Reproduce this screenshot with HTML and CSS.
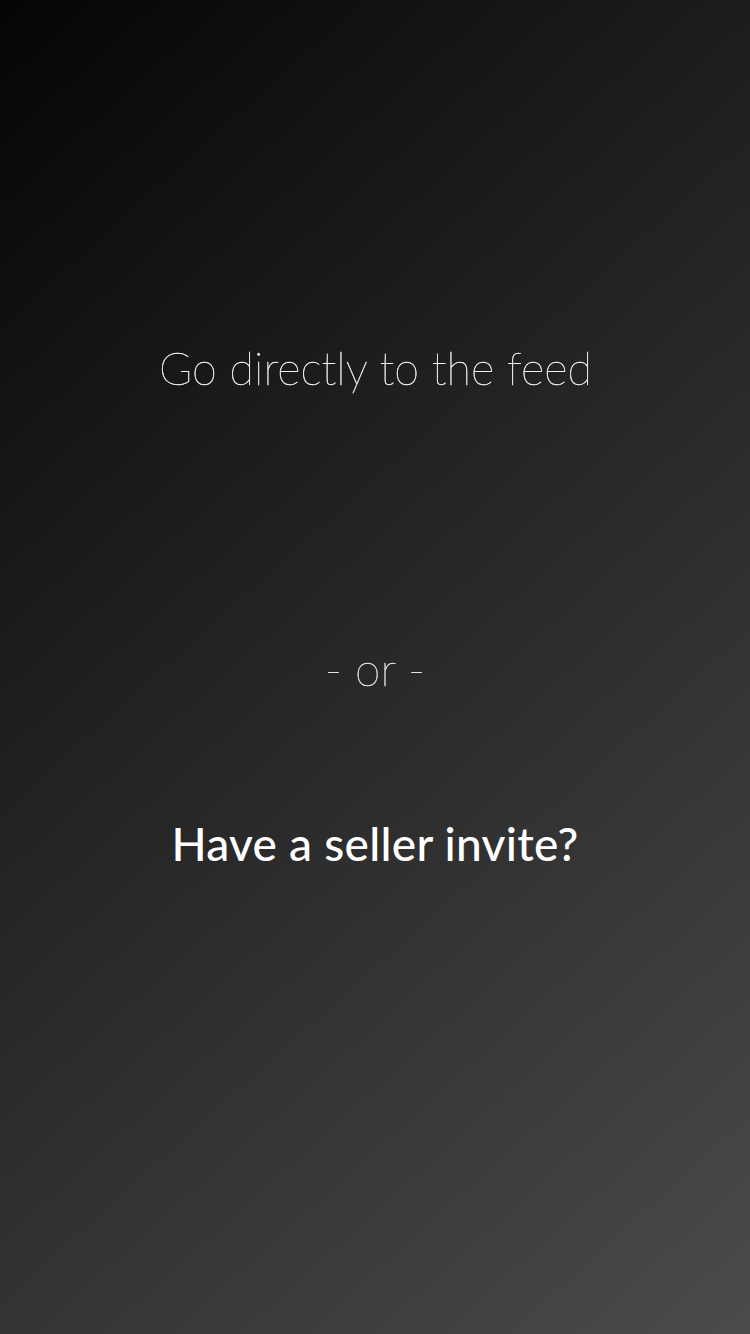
FILE: index.html
```html
<!DOCTYPE html>
<html lang="en">
<head>
<meta charset="utf-8">
<title>Welcome</title>
<link rel="stylesheet" href="styles.css">
</head>
<body>
<main class="screen">
  <a class="feed-link" href="#">Go directly to the feed</a>
  <p class="divider">- or -</p>
  <a class="invite-link" href="#">Have a seller invite?</a>
</main>
</body>
</html>
```
FILE: styles.css
```css
html, body {
  margin: 0;
  padding: 0;
}
body {
  width: 750px;
  height: 1334px;
  overflow: hidden;
  font-family: "Lato", "Open Sans", "Liberation Sans", sans-serif;
}
.screen {
  box-sizing: border-box;
  width: 750px;
  height: 1334px;
  background: linear-gradient(138deg, #050505 0%, #4b4b4b 100%);
  display: flex;
  flex-direction: column;
  align-items: center;
  padding-top: 338px;
}
.feed-link,
.divider {
  will-change: transform;
  -webkit-font-smoothing: antialiased;
  -webkit-text-stroke: 0.45px currentColor;
}
.feed-link {
  color: #f0f0f0;
  text-decoration: none;
  font-size: 45px;
  font-weight: 100;
  line-height: 60px;
}
.divider {
  margin: 241px 0 0;
  color: #e4e4e4;
  font-size: 46px;
  font-weight: 100;
  line-height: 60px;
}
.invite-link {
  margin-top: 115px;
  color: #ffffff;
  text-decoration: none;
  font-size: 46px;
  font-weight: 500;
  line-height: 60px;
  letter-spacing: 0.3px;
}
```
